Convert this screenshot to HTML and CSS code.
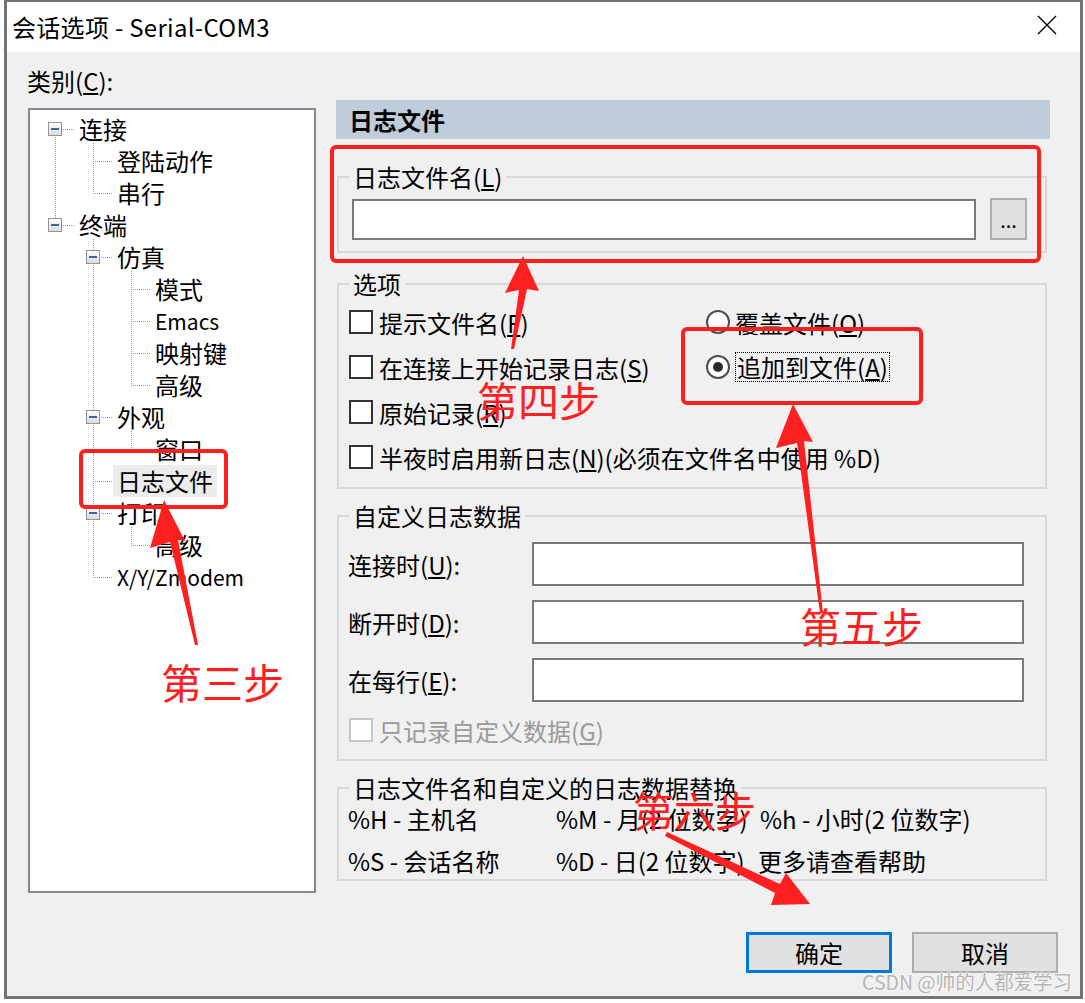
FILE: index.html
```html
<!DOCTYPE html>
<html lang="zh-CN">
  <head>
    <meta charset="UTF-8" />
    <title>会话选项 - Serial-COM3</title>
    <link rel="stylesheet" href="styles.css">
  </head>
  <body>
    <div class="window">
      <div class="titlebar">
        <span class="title">会话选项 - Serial-COM3</span>
        <svg class="close" width="20" height="20" viewBox="0 0 20 20">
          <path d="M1 1L19 19M19 1L1 19" stroke="#000" stroke-width="1.4" fill="none" />
        </svg>
      </div>

      <div class="dialog">
        <div class="main">
          <!-- 类别树 -->
          <div class="left">
            <div class="cat-label">类别(<u>C</u>):</div>
            <div class="tree">
              <svg class="tree-lines" width="284" height="781">
                <path stroke="#9a9a9a" stroke-width="1" stroke-dasharray="1 1" fill="none"
                  d="M25.5 19V115 M25 19.5H44 M25 115.5H44
                     M63.5 33V83 M63 51.5H82 M63 83.5H82
                     M63.5 129V467 M63 147.5H82 M63 307.5H82 M63 371.5H82 M63 403.5H82 M63 467.5H82
                     M101.5 161V275 M101 179.5H120 M101 211.5H120 M101 243.5H120 M101 275.5H120
                     M101.5 321V339 M101 339.5H120
                     M101.5 417V435 M101 435.5H120" />
              </svg>
              <div class="node l0"><span class="stub"><span class="exp"></span></span>连接</div>
              <div class="node l1"><span class="stub"></span>登陆动作</div>
              <div class="node l1"><span class="stub"></span>串行</div>
              <div class="node l0"><span class="stub"><span class="exp"></span></span>终端</div>
              <div class="node l1"><span class="stub"><span class="exp"></span></span>仿真</div>
              <div class="node l2"><span class="stub"></span>模式</div>
              <div class="node l2"><span class="stub"></span><span class="lat">Emacs</span></div>
              <div class="node l2"><span class="stub"></span>映射键</div>
              <div class="node l2"><span class="stub"></span>高级</div>
              <div class="node l1"><span class="stub"><span class="exp"></span></span>外观</div>
              <div class="node l2"><span class="stub"></span>窗口</div>
              <div class="node l1"><span class="stub"></span><span class="sel">日志文件</span></div>
              <div class="node l1"><span class="stub"><span class="exp"></span></span>打印</div>
              <div class="node l2"><span class="stub"></span>高级</div>
              <div class="node l1"><span class="stub"></span><span class="lat">X/Y/Zmodem</span></div>
            </div>
          </div>

          <!-- 日志文件页 -->
          <div class="right">
            <div class="page-head">日志文件</div>

            <fieldset class="group g-file">
              <legend>日志文件名(<u>L</u>)</legend>
              <div class="file-row">
                <span class="field"></span>
                <span class="browse">...</span>
              </div>
            </fieldset>

            <fieldset class="group g-opts">
              <legend>选项</legend>
              <div class="opts">
                <div class="opt"><span class="cb"></span><span>提示文件名(<u>F</u>)</span></div>
                <div class="opt radio"><span class="rb"></span><span>覆盖文件(<u>O</u>)</span></div>
                <div class="opt"><span class="cb"></span><span>在连接上开始记录日志(<u>S</u>)</span></div>
                <div class="opt radio"><span class="rb on"></span><span class="focus">追加到文件(<u>A</u>)</span></div>
                <div class="opt"><span class="cb"></span><span>原始记录(<u>R</u>)</span></div>
                <div></div>
                <div class="opt wide"><span class="cb"></span><span>半夜时启用新日志(<u>N</u>)(必须在文件名中使用 %D)</span></div>
              </div>
            </fieldset>

            <fieldset class="group g-custom">
              <legend>自定义日志数据</legend>
              <div class="custom">
                <span class="lbl">连接时(<u>U</u>):</span><span class="field"></span>
                <span class="lbl">断开时(<u>D</u>):</span><span class="field"></span>
                <span class="lbl">在每行(<u>E</u>):</span><span class="field"></span>
              </div>
              <div class="opt disabled"><span class="cb off"></span><span>只记录自定义数据(<u>G</u>)</span></div>
            </fieldset>

            <fieldset class="group g-vars">
              <legend>日志文件名和自定义的日志数据替换</legend>
              <div class="vars">
                <span>%H - 主机名</span>
                <span>%M - 月(2 位数字)</span>
                <span>%h - 小时(2 位数字)</span>
                <span>%S - 会话名称</span>
                <span>%D - 日(2 位数字)</span>
                <span class="more">更多请查看帮助</span>
              </div>
            </fieldset>
          </div>
        </div>

        <div class="buttons">
          <span class="btn default">确定</span>
          <span class="btn">取消</span>
        </div>
      </div>
    </div>

    <!-- 标注 -->
    <svg class="marks" width="1085" height="1003" viewBox="0 0 1085 1003">
      <g fill="none" stroke="#fe2020" stroke-width="4">
        <rect x="81" y="451" width="145" height="56" rx="4" />
        <rect x="332" y="147" width="707" height="114" rx="4" />
        <rect x="683" y="329" width="238" height="74" rx="4" />
      </g>
      <g fill="#fe2020">
        <polygon points="164,500 185,541 178,540 198,645 195,645 170,542 150,548" />
        <polygon points="523,256 539,291 527,289 514,349 511,349 519,290 505,293" />
        <polygon points="793,404 813,442 804,441 823,613 820,613 797,443 776,448" />
        <polygon points="810,904 771,905 775,893 665,836 667,832 780,884 786,873" />
        <text class="step" x="161" y="699" font-size="42">第三步</text>
        <text class="step" x="477" y="417">第四步</text>
        <text class="step" x="800" y="643">第五步</text>
        <text class="step" x="633" y="827">第六步</text>
      </g>
      <text class="mark" x="862" y="990" textLength="210" lengthAdjust="spacingAndGlyphs">CSDN @帅的人都爱学习</text>
    </svg>
  </body>
</html>
```

FILE: styles.css
```css
body {
  margin: 0;
  background: #fff;
  font-family: "Noto Sans CJK SC", "Noto Sans", sans-serif;
  font-size: 24px;
  color: #000;
}
u {
  text-decoration: underline;
  text-underline-offset: 2px;
}
.window {
  margin-left: 4px;
  width: 1079px;
  height: 999px;
  box-sizing: border-box;
  border: 3px solid #747474;
  border-top-width: 2px;
  display: flex;
  flex-direction: column;
}
.titlebar {
  height: 50px;
  flex: none;
  background: #fff;
  display: flex;
  align-items: center;
  justify-content: space-between;
  padding-left: 5px;
}
.title {
  line-height: 50px;
  letter-spacing: 0.3px;
}
.close {
  margin-right: 23px;
  margin-top: -4px;
}
.dialog {
  flex: 1;
  background: #f0f0f0;
  padding: 14px 0 0 21px;
}
.main {
  display: flex;
  gap: 20px;
}
.left {
  width: 288px;
}
.cat-label {
  line-height: 30px;
  margin-left: -1px;
}

/* tree */
.tree {
  margin-top: 12px;
  height: 785px;
  box-sizing: border-box;
  border: 2px solid #828790;
  background: #fff;
  padding-top: 3px;
  position: relative;
}
.tree-lines {
  position: absolute;
  left: 0;
  top: 0;
}
.node {
  position: relative;
  display: flex;
  align-items: center;
  height: 32px;
  line-height: 32px;
  white-space: nowrap;
}
.l0 { padding-left: 18px; }
.l1 { padding-left: 56px; }
.l2 { padding-left: 94px; }
.stub {
  width: 31px;
  flex: none;
  display: flex;
  align-items: center;
}
.exp {
  width: 14px;
  height: 14px;
  box-sizing: border-box;
  border: 1px solid #939393;
  background: linear-gradient(#fdfdfd, #dcdcdc);
  position: relative;
}
.exp::after {
  content: "";
  position: absolute;
  left: 2px;
  top: 5px;
  width: 8px;
  height: 2px;
  background: #3f5fa6;
}
.lat {
  font-size: 21px;
}
.sel {
  background: #ececec;
  padding: 0 4px;
  margin-left: -4px;
}

/* right page */
.right {
  width: 714px;
  padding-top: 34px;
}
.page-head {
  height: 39px;
  line-height: 39px;
  background: #bfcddb;
  font-weight: bold;
  padding-left: 13px;
}
.group {
  margin: 13px 3px 0 1px;
  padding: 0 18px 0 10px;
  border: 2px solid #d8d8d8;
  min-width: 0;
}
.group legend {
  padding: 0 4px;
  line-height: 28px;
}
.field {
  display: block;
  box-sizing: border-box;
  border: 2px solid #7a7a7a;
  background: #fff;
}
.g-file {
  margin-top: 24px;
  padding-top: 7px;
  padding-bottom: 11px;
}
.file-row {
  display: flex;
  align-items: center;
  gap: 14px;
  padding-left: 3px;
}
.file-row .field {
  flex: 1;
  height: 41px;
}
.browse {
  width: 37px;
  height: 42px;
  box-sizing: border-box;
  border: 2px solid #adadad;
  background: #e1e1e1;
  text-align: center;
  font-size: 20px;
  line-height: 40px;
}

.g-opts {
  margin-top: 17px;
  padding-top: 8px;
  padding-bottom: 14px;
}
.opts {
  display: grid;
  grid-template-columns: 357px 1fr;
  grid-auto-rows: 32px;
  row-gap: 13px;
}
.opt {
  display: flex;
  align-items: center;
  gap: 6px;
  height: 32px;
  white-space: nowrap;
}
.opt.wide {
  grid-column: 1 / 3;
}
.opt.radio {
  gap: 5px;
}
.cb {
  width: 24px;
  height: 24px;
  flex: none;
  box-sizing: border-box;
  border: 2px solid #333;
  background: #fff;
}
.rb {
  width: 24px;
  height: 24px;
  flex: none;
  box-sizing: border-box;
  border: 2px solid #4d4d4d;
  border-radius: 50%;
  background: #fff;
  display: flex;
  align-items: center;
  justify-content: center;
}
.rb.on::after {
  content: "";
  width: 10px;
  height: 10px;
  border-radius: 50%;
  background: #2b2b2b;
}
.focus {
  border: 1px dotted #000;
  padding: 0 1px;
  line-height: 28px;
}

.g-custom {
  padding-top: 12px;
  padding-bottom: 13px;
  padding-right: 21px;
}
.custom {
  display: grid;
  grid-template-columns: 183px 1fr;
  grid-auto-rows: 44px;
  row-gap: 14px;
  align-items: center;
}
.custom .field {
  height: 44px;
}
.lbl {
  margin-left: -1px;
}
.opt.disabled {
  margin-top: 12px;
  color: #9a9a9a;
}
.cb.off {
  border-color: #c6c6c6;
}

.g-vars {
  padding-top: 1px;
  padding-bottom: 2px;
}
.vars {
  display: grid;
  grid-template-columns: 208px 204px auto;
  grid-auto-rows: 32px;
  row-gap: 10px;
  line-height: 32px;
  margin-left: -1px;
  white-space: nowrap;
}
.vars .more {
  margin-left: -2px;
}

/* buttons */
.buttons {
  display: flex;
  justify-content: flex-end;
  gap: 20px;
  padding-right: 22px;
  margin-top: 39px;
}
.btn {
  width: 146px;
  height: 41px;
  box-sizing: border-box;
  border: 2px solid #adadad;
  background: #e1e1e1;
  display: flex;
  align-items: center;
  justify-content: center;
}
.btn.default {
  border: 3px solid #0078d7;
}

/* annotations */
.marks {
  position: absolute;
  left: 0;
  top: 0;
  pointer-events: none;
}
.marks text {
  font-family: "Noto Sans CJK SC", sans-serif;
}
.step {
  font-size: 41px;
}
.mark {
  font-size: 20px;
  fill: #b4b4b4;
  stroke: #fff;
  stroke-width: 1px;
  paint-order: stroke;
}
```
